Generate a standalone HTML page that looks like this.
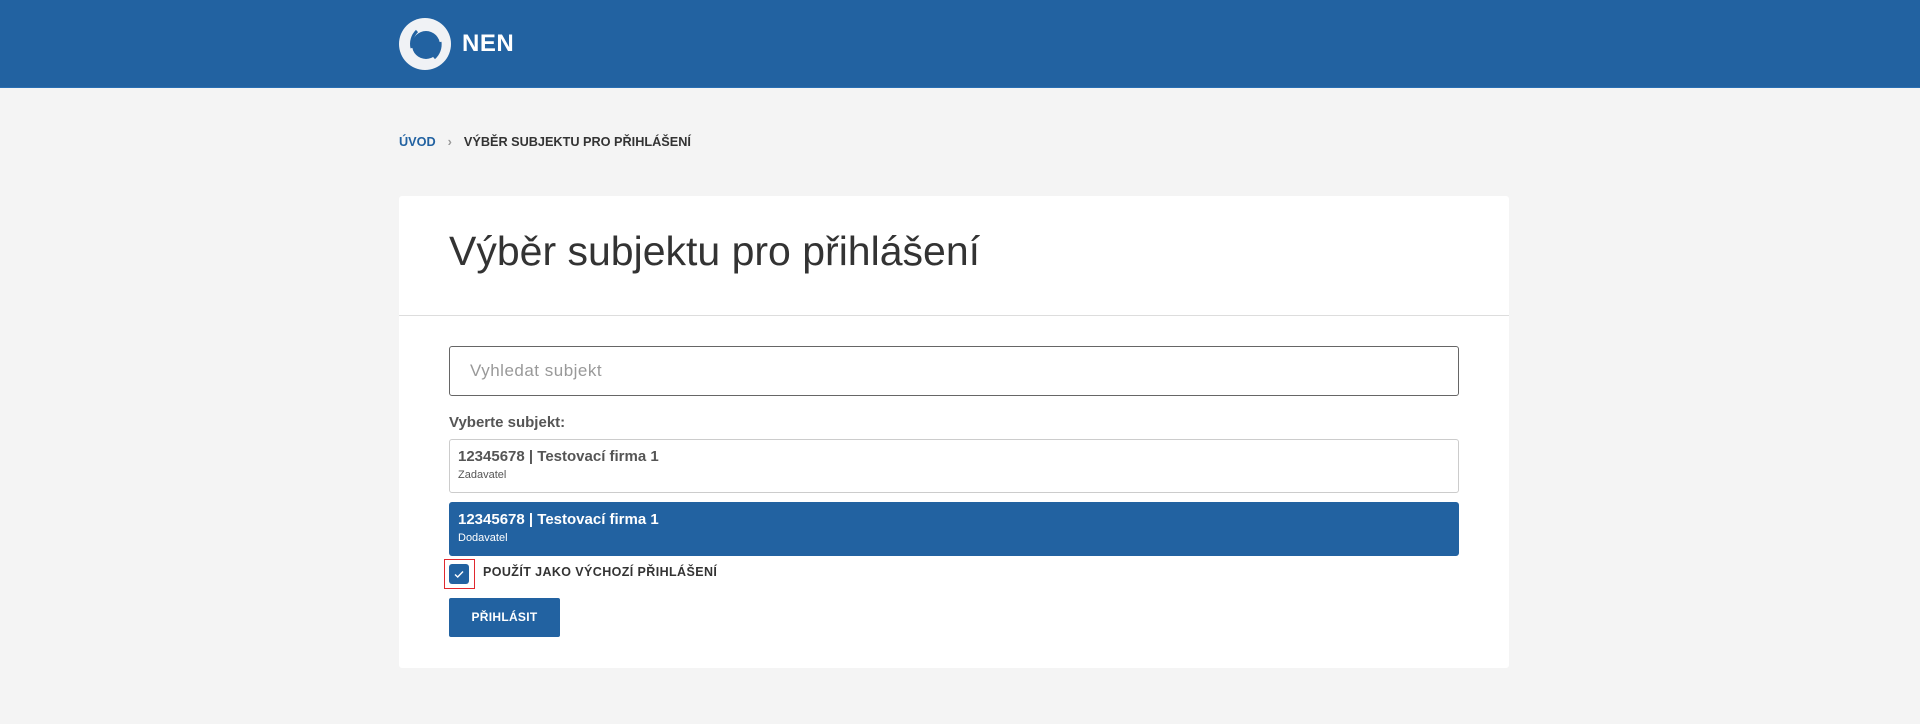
<!DOCTYPE html>
<html><head><meta charset="utf-8"><style>
*{margin:0;padding:0;box-sizing:border-box}
body{width:1920px;height:724px;background:#f4f4f4;font-family:"Liberation Sans",Arial,sans-serif;position:relative;overflow:hidden}
.hdr{position:absolute;left:0;top:0;width:1920px;height:88px;background:#2262a1;border-bottom:1px solid #2a6fb3}
.nen{position:absolute;left:462px;top:30px;color:#fff;font-weight:bold;font-size:24px;letter-spacing:0.5px}
.bc{position:absolute;left:399px;top:135px;font-size:12.7px;font-weight:bold;color:#333;letter-spacing:0}
.bc .a{color:#2262a1}
.bc .s{color:#999;margin:0 12px}
.card{position:absolute;left:399px;top:196px;width:1110px;height:472px;background:#fff;border-radius:3px}
h1{position:absolute;left:50px;top:32px;font-weight:normal;font-size:41px;color:#333}
.div{position:absolute;left:0;top:119px;width:1110px;height:1px;background:#ddd}
.inp{position:absolute;left:50px;top:150px;width:1010px;height:50px;border:1px solid #666;border-radius:3px;font-size:17px;color:#999;padding:14px 20px;letter-spacing:0.5px}
.lbl{position:absolute;left:50px;top:218px;font-size:15px;font-weight:bold;color:#555}
.it{position:absolute;left:50px;width:1010px;height:54px;border:1px solid #ccc;border-radius:3px;padding:8px 8px}
.it b{display:block;font-size:15px;color:#555}
.it span{display:block;font-size:11px;color:#555;margin-top:4px}
.it.sel{background:#2262a1;border-color:#2262a1}
.it.sel b,.it.sel span{color:#fff}
.cbw{position:absolute;left:45px;top:363px;width:31px;height:30px;border:1px solid #e0282e}
.cb{position:absolute;left:4px;top:4px;width:20px;height:20px;background:#2262a1;border-radius:3px}
.cbl{position:absolute;left:84px;top:369px;font-size:12.5px;font-weight:bold;color:#333;letter-spacing:0.4px}
.btn{position:absolute;left:50px;top:402px;width:111px;height:39px;background:#2262a1;border-radius:2px;color:#fff;font-size:12px;font-weight:bold;text-align:center;line-height:39px;letter-spacing:0.3px}
</style></head><body>
<div class="hdr">
<svg style="position:absolute;left:399px;top:18px" width="52" height="52" viewBox="0 0 52 52">
<circle cx="26" cy="26" r="26" fill="#f0f2f5"/>
<circle cx="27" cy="27" r="14" fill="#2262a1"/>
<path d="M13 30 A18 18 0 0 1 18 13" stroke="#2262a1" stroke-width="3" fill="none"/>
<path d="M41 24 A18 18 0 0 1 35 40" stroke="#2262a1" stroke-width="3" fill="none"/>
</svg>
<div class="nen">NEN</div></div>
<div class="bc"><span class="a">ÚVOD</span><span class="s">›</span>VÝBĚR SUBJEKTU PRO PŘIHLÁŠENÍ</div>
<div class="card">
<h1>Výběr subjektu pro přihlášení</h1>
<div class="div"></div>
<div class="inp">Vyhledat subjekt</div>
<div class="lbl">Vyberte subjekt:</div>
<div class="it" style="top:243px"><b>12345678 | Testovací firma 1</b><span>Zadavatel</span></div>
<div class="it sel" style="top:306px"><b>12345678 | Testovací firma 1</b><span>Dodavatel</span></div>
<div class="cbw"><div class="cb"><svg width="20" height="20" viewBox="0 0 20 20"><path d="M6 10.5 L8.7 13 L14 7.5" stroke="#fff" stroke-width="1.4" fill="none"/></svg></div></div>
<div class="cbl">POUŽÍT JAKO VÝCHOZÍ PŘIHLÁŠENÍ</div>
<div class="btn">PŘIHLÁSIT</div>
</div>
</body></html>
